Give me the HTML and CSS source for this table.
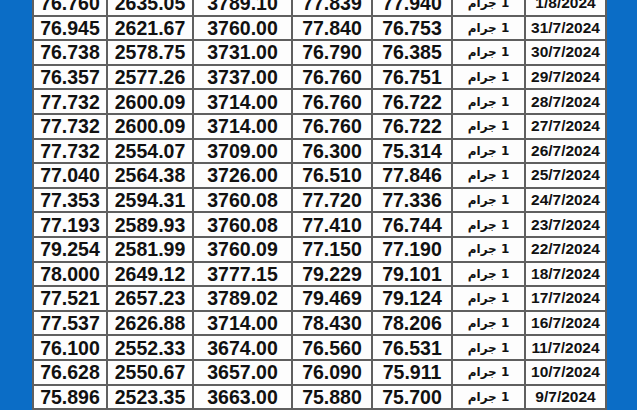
FILE: index.html
```html
<!DOCTYPE html>
<html lang="ar">
<head>
<meta charset="utf-8">
<link rel="stylesheet" href="styles.css">
</head>
<body>
<div class="page">
<table class="prices" dir="ltr">
<colgroup>
<col class="c1"><col class="c2"><col class="c3"><col class="c4"><col class="c5"><col class="c6"><col class="c7">
</colgroup>
<tbody>
<tr><td>76.760</td><td>2635.05</td><td>3789.10</td><td>77.839</td><td>77.940</td><td class="unit">1 جرام</td><td class="date">1/8/2024</td></tr>
<tr><td>76.945</td><td>2621.67</td><td>3760.00</td><td>77.840</td><td>76.753</td><td class="unit">1 جرام</td><td class="date">31/7/2024</td></tr>
<tr><td>76.738</td><td>2578.75</td><td>3731.00</td><td>76.790</td><td>76.385</td><td class="unit">1 جرام</td><td class="date">30/7/2024</td></tr>
<tr><td>76.357</td><td>2577.26</td><td>3737.00</td><td>76.760</td><td>76.751</td><td class="unit">1 جرام</td><td class="date">29/7/2024</td></tr>
<tr><td>77.732</td><td>2600.09</td><td>3714.00</td><td>76.760</td><td>76.722</td><td class="unit">1 جرام</td><td class="date">28/7/2024</td></tr>
<tr><td>77.732</td><td>2600.09</td><td>3714.00</td><td>76.760</td><td>76.722</td><td class="unit">1 جرام</td><td class="date">27/7/2024</td></tr>
<tr><td>77.732</td><td>2554.07</td><td>3709.00</td><td>76.300</td><td>75.314</td><td class="unit">1 جرام</td><td class="date">26/7/2024</td></tr>
<tr><td>77.040</td><td>2564.38</td><td>3726.00</td><td>76.510</td><td>77.846</td><td class="unit">1 جرام</td><td class="date">25/7/2024</td></tr>
<tr><td>77.353</td><td>2594.31</td><td>3760.08</td><td>77.720</td><td>77.336</td><td class="unit">1 جرام</td><td class="date">24/7/2024</td></tr>
<tr><td>77.193</td><td>2589.93</td><td>3760.08</td><td>77.410</td><td>76.744</td><td class="unit">1 جرام</td><td class="date">23/7/2024</td></tr>
<tr><td>79.254</td><td>2581.99</td><td>3760.09</td><td>77.150</td><td>77.190</td><td class="unit">1 جرام</td><td class="date">22/7/2024</td></tr>
<tr><td>78.000</td><td>2649.12</td><td>3777.15</td><td>79.229</td><td>79.101</td><td class="unit">1 جرام</td><td class="date">18/7/2024</td></tr>
<tr><td>77.521</td><td>2657.23</td><td>3789.02</td><td>79.469</td><td>79.124</td><td class="unit">1 جرام</td><td class="date">17/7/2024</td></tr>
<tr><td>77.537</td><td>2626.88</td><td>3714.00</td><td>78.430</td><td>78.206</td><td class="unit">1 جرام</td><td class="date">16/7/2024</td></tr>
<tr><td>76.100</td><td>2552.33</td><td>3674.00</td><td>76.560</td><td>76.531</td><td class="unit">1 جرام</td><td class="date">11/7/2024</td></tr>
<tr><td>76.628</td><td>2550.67</td><td>3657.00</td><td>76.090</td><td>75.911</td><td class="unit">1 جرام</td><td class="date">10/7/2024</td></tr>
<tr><td>75.896</td><td>2523.35</td><td>3663.00</td><td>75.880</td><td>75.700</td><td class="unit">1 جرام</td><td class="date">9/7/2024</td></tr>
<tr class="cut"><td></td><td></td><td></td><td></td><td></td><td></td><td></td></tr>
</tbody>
</table>
</div>
</body>
</html>
```

FILE: styles.css
```css
html, body {
  margin: 0;
  padding: 0;
  background: #0b6dc6;
  overflow: hidden;
}

.page {
  width: 637px;
  height: 410px;
  overflow: hidden;
  padding-left: 32px;
  box-sizing: border-box;
}

.prices {
  margin-top: -10px;
  width: 573px;
  table-layout: fixed;
  border-collapse: collapse;
  background: #fdfdfd;
  font-family: "Liberation Sans", Arial, sans-serif;
  font-weight: bold;
  color: #111;
}

.c1 { width: 74px; }
.c2 { width: 86px; }
.c3 { width: 99px; }
.c4 { width: 80px; }
.c5 { width: 80px; }
.c6 { width: 73px; }
.c7 { width: 81px; }

.prices td {
  border: 2px solid #5f5f5f;
  height: 22.6px;
  padding: 0;
  text-align: center;
  vertical-align: middle;
  font-size: 19.5px;
  line-height: 20px;
  white-space: nowrap;
  overflow: hidden;
}

.prices td.unit {
  font-family: "DejaVu Sans", "Liberation Sans", sans-serif;
  font-size: 12px;
  font-weight: bold;
  direction: rtl;
}

.prices td.date {
  font-size: 15.5px;
}

.prices tr.cut td {
  height: 20px;
}
```
